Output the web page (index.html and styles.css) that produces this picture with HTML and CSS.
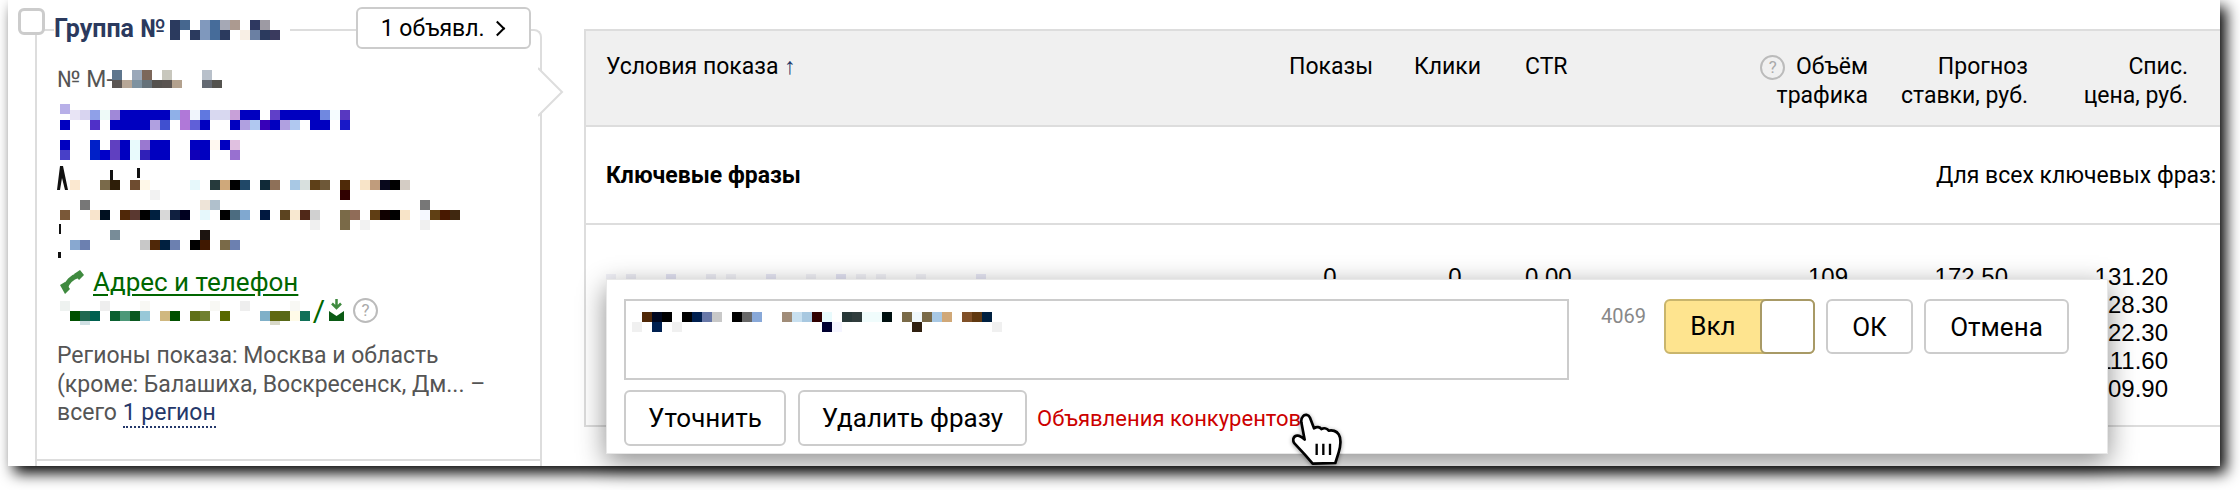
FILE: index.html
```html
<!DOCTYPE html>
<html lang="ru">
<head>
  <meta charset="UTF-8">
  <title>Группа объявлений</title>
  <link rel="stylesheet" href="styles.css">
</head>
<body>
  <div class="shot">
  <div class="page">

    <!-- Левая карточка группы -->
    <section class="group">
      <div class="group-head">
        <span class="checkbox"></span>
        <div class="group-title"><span class="group-name">Группа №</span>
          <svg class="mosaic mosaic-title" width="120" height="20">
            <rect x="0" y="0" fill="#2b3a5e"/><rect x="10" y="0" fill="#46678f"/><rect x="30" y="0" fill="#8199bd"/><rect x="40" y="0" fill="#466c9a"/><rect x="50" y="0" fill="#a5a8b5"/><rect x="60" y="0" fill="#ac9a90"/><rect x="80" y="0" fill="#2e3860"/><rect x="90" y="0" fill="#9d9aa3"/>
            <rect x="0" y="10" fill="#2b3a5e"/><rect x="20" y="10" fill="#2b3a5e"/><rect x="30" y="10" fill="#7f98bd"/><rect x="40" y="10" fill="#466c9a"/><rect x="50" y="10" fill="#2b3a5e"/><rect x="70" y="10" fill="#f8efe5"/><rect x="80" y="10" fill="#6b80a3"/><rect x="90" y="10" fill="#2b3a5e"/><rect x="100" y="10" fill="#3a3a5e"/>
          </svg>
        </div>
        <button class="btn btn-ads">1 объявл. <span class="chevron"></span></button>
      </div>

      <div class="group-num"><span class="num-label">№ М-</span><svg class="mosaic mosaic-num" width="110" height="18">
          <rect x="0" y="0" fill="#5e768d"/><rect x="20" y="0" fill="#9aa8ba"/><rect x="30" y="0" fill="#7c675a"/><rect x="50" y="0" fill="#c8c7bd"/><rect x="90" y="0" fill="#b8c0ca"/>
          <rect x="0" y="10" fill="#5b5654"/><rect x="10" y="10" fill="#b7a797"/><rect x="20" y="10" fill="#7e92a0"/><rect x="30" y="10" fill="#66727a"/><rect x="40" y="10" fill="#55524f"/><rect x="50" y="10" fill="#5a5451"/><rect x="60" y="10" fill="#b3a18e"/><rect x="90" y="10" fill="#646a73"/><rect x="100" y="10" fill="#54534f"/>
        </svg>
      </div>

      <!-- Заголовок и текст объявления -->
      <svg class="mosaic mosaic-ad" width="450" height="158">
        <path d="M3 66L0 90H3L5 78L8 90H11L6 66Z M2 124H4V134H2Z M1 152H4V158H1Z" fill="#111"/>
        <rect x="53" y="70" fill="#111" class="sliver"/><rect x="80" y="68" fill="#111" class="sliver"/>
        <g transform="translate(3 0)">
          <rect x="0" y="4" fill="#b8b0e8"/>
          <rect x="10" y="10" fill="#e8e4f5"/><rect x="20" y="10" fill="#d8d4f0"/><rect x="30" y="10" fill="#8fa0e8"/><rect x="40" y="10" fill="#eefaf8"/><rect x="50" y="10" fill="#a088d8"/><rect x="60" y="10" fill="#0000c0"/><rect x="70" y="10" fill="#0000c0"/><rect x="80" y="10" fill="#0000c0"/><rect x="90" y="10" fill="#0000c0"/><rect x="100" y="10" fill="#0000c0"/><rect x="110" y="10" fill="#8fb0e8"/><rect x="120" y="10" fill="#b078d8"/><rect x="130" y="10" fill="#f0f5fc"/><rect x="140" y="10" fill="#6078e0"/><rect x="150" y="10" fill="#d8d8f0"/><rect x="160" y="10" fill="#d8d8f0"/><rect x="170" y="10" fill="#c8a0d8"/><rect x="180" y="10" fill="#0000c0"/><rect x="190" y="10" fill="#0000c0"/><rect x="210" y="10" fill="#6040c8"/><rect x="220" y="10" fill="#0000c0"/><rect x="230" y="10" fill="#0000c0"/><rect x="240" y="10" fill="#0000c0"/><rect x="250" y="10" fill="#0000c0"/><rect x="260" y="10" fill="#7088e0"/><rect x="270" y="10" fill="#f5fcff"/><rect x="280" y="10" fill="#5838c0"/>
          <rect x="0" y="20" fill="#0000c0"/><rect x="30" y="20" fill="#5030c8"/><rect x="50" y="20" fill="#0000c0"/><rect x="60" y="20" fill="#0000c0"/><rect x="70" y="20" fill="#0000c0"/><rect x="80" y="20" fill="#0000c0"/><rect x="90" y="20" fill="#b0a0e0"/><rect x="100" y="20" fill="#4050d0"/><rect x="120" y="20" fill="#b078d8"/><rect x="130" y="20" fill="#6060d8"/><rect x="140" y="20" fill="#0000c0"/><rect x="170" y="20" fill="#0000c0"/><rect x="180" y="20" fill="#b0a0e0"/><rect x="190" y="20" fill="#b0c8f0"/><rect x="200" y="20" fill="#3800b8"/><rect x="210" y="20" fill="#0000c0"/><rect x="220" y="20" fill="#b0a0e0"/><rect x="230" y="20" fill="#b0c8f0"/><rect x="250" y="20" fill="#0000c0"/><rect x="260" y="20" fill="#0000c0"/><rect x="280" y="20" fill="#1818c8"/>
          <rect x="0" y="40" fill="#0000c0"/><rect x="30" y="40" fill="#0020c8"/><rect x="50" y="40" fill="#6040c0"/><rect x="60" y="40" fill="#0000c0"/><rect x="70" y="40" fill="#e8fafc"/><rect x="80" y="40" fill="#9a78d0"/><rect x="90" y="40" fill="#0000c0"/><rect x="100" y="40" fill="#0000c0"/><rect x="130" y="40" fill="#0000c0"/><rect x="140" y="40" fill="#0000c0"/><rect x="150" y="40" fill="#fff8f0"/><rect x="160" y="40" fill="#0000c0"/><rect x="170" y="40" fill="#e0c0e0"/>
          <rect x="0" y="50" fill="#4840c8"/><rect x="30" y="50" fill="#0020c8"/><rect x="40" y="50" fill="#0000c8"/><rect x="50" y="50" fill="#6040c0"/><rect x="60" y="50" fill="#0000c0"/><rect x="70" y="50" fill="#e8fafc"/><rect x="80" y="50" fill="#3020b8"/><rect x="90" y="50" fill="#0000c0"/><rect x="100" y="50" fill="#0000c0"/><rect x="130" y="50" fill="#1000b8"/><rect x="140" y="50" fill="#0000c0"/><rect x="170" y="50" fill="#9870d0"/>
          <rect x="10" y="80" fill="#fbe8d0"/><rect x="40" y="80" fill="#7a6a4a"/><rect x="50" y="80" fill="#2e1e08"/><rect x="70" y="80" fill="#6e4c30"/><rect x="80" y="80" fill="#fff8e8"/><rect x="130" y="80" fill="#e6f8fb"/><rect x="150" y="80" fill="#263a3c"/><rect x="160" y="80" fill="#cfa87a"/><rect x="170" y="80" fill="#000"/><rect x="180" y="80" fill="#204868"/><rect x="200" y="80" fill="#102a38"/><rect x="210" y="80" fill="#8e7058"/><rect x="230" y="80" fill="#a8c8e4"/><rect x="240" y="80" fill="#d8e0de"/><rect x="250" y="80" fill="#5e4018"/><rect x="260" y="80" fill="#6e5838"/><rect x="280" y="80" fill="#4f2a08"/><rect x="300" y="80" fill="#f8e4c8"/><rect x="310" y="80" fill="#c09c7c"/><rect x="320" y="80" fill="#08081c"/><rect x="330" y="80" fill="#000"/><rect x="340" y="80" fill="#d4ccc4"/>
          <rect x="280" y="90" fill="#300000"/><rect x="90" y="90" fill="#f2f2f2"/>
          <rect x="20" y="100" fill="#777"/><rect x="140" y="100" fill="#eee4d8"/><rect x="150" y="100" fill="#b0c0cc"/><rect x="360" y="100" fill="#777"/>
          <rect x="0" y="110" fill="#7a5838"/><rect x="30" y="110" fill="#f8e4cc"/><rect x="40" y="110" fill="#001020"/><rect x="60" y="110" fill="#502808"/><rect x="70" y="110" fill="#5a3830"/><rect x="80" y="110" fill="#000"/><rect x="90" y="110" fill="#002040"/><rect x="100" y="110" fill="#d8d8d8"/><rect x="110" y="110" fill="#102040"/><rect x="120" y="110" fill="#000020"/><rect x="140" y="110" fill="#e6f8fc"/><rect x="160" y="110" fill="#000"/><rect x="170" y="110" fill="#4c6c80"/><rect x="180" y="110" fill="#80a8d0"/><rect x="200" y="110" fill="#001840"/><rect x="220" y="110" fill="#5c4420"/><rect x="230" y="110" fill="#f8e8d0"/><rect x="240" y="110" fill="#502818"/><rect x="250" y="110" fill="#d0d0d0"/><rect x="280" y="110" fill="#7a6a48"/><rect x="290" y="110" fill="#906c58"/><rect x="310" y="110" fill="#603e14"/><rect x="320" y="110" fill="#100000"/><rect x="330" y="110" fill="#000"/><rect x="340" y="110" fill="#f8e4c8"/><rect x="360" y="110" fill="#f5f8ff"/><rect x="370" y="110" fill="#604014"/><rect x="380" y="110" fill="#481800"/><rect x="390" y="110" fill="#402810"/>
          <rect x="250" y="120" fill="#f0f0f0"/><rect x="280" y="120" fill="#7a6a48"/><rect x="300" y="120" fill="#f2f2f2"/><rect x="360" y="120" fill="#f0f0f0"/>
          <rect x="50" y="130" fill="#788c98"/><rect x="140" y="130" fill="#1c1410"/>
          <rect x="10" y="140" fill="#88a8d0"/><rect x="20" y="140" fill="#6c80b0"/><rect x="80" y="140" fill="#c8c8c8"/><rect x="90" y="140" fill="#502808"/><rect x="100" y="140" fill="#002040"/><rect x="110" y="140" fill="#6c80b0"/><rect x="130" y="140" fill="#000"/><rect x="140" y="140" fill="#401800"/><rect x="160" y="140" fill="#7a6a48"/><rect x="170" y="140" fill="#6c80b0"/>
        </g>
      </svg>

      <div class="contact-link">
        <svg class="icon-phone" width="24" height="24" viewBox="0 0 24 24">
          <path d="M5.500 18C6.500 12.500 12 7 18 5.500" fill="none" stroke="#3f8a3f" stroke-width="5"/>
          <path d="M14 4L20 0L24 5L19 10Z M0 15L5 12L10 19L5 24Z" fill="#3f8a3f"/>
        </svg>
        <a class="link-green">Адрес и телефон</a>
      </div>

      <div class="contact-site">
        <svg class="mosaic mosaic-site" width="254" height="24">
          <g transform="translate(3 0)">
            <rect x="0" y="0" fill="#eef2f0"/><rect x="40" y="0" fill="#eeeeee"/><rect x="80" y="0" fill="#f8f8f4"/><rect x="150" y="0" fill="#f8f8f4"/><rect x="180" y="0" fill="#eeeeee"/><rect x="230" y="0" fill="#f8f8f4"/>
            <rect x="10" y="10" fill="#005000"/><rect x="20" y="10" fill="#206850"/><rect x="30" y="10" fill="#006050"/><rect x="50" y="10" fill="#0a6030"/><rect x="60" y="10" fill="#4c9878"/><rect x="70" y="10" fill="#0a5820"/><rect x="80" y="10" fill="#98c8d8"/><rect x="100" y="10" fill="#d0b880"/><rect x="110" y="10" fill="#005000"/><rect x="130" y="10" fill="#607018"/><rect x="140" y="10" fill="#708030"/><rect x="160" y="10" fill="#586800"/><rect x="200" y="10" fill="#80b0c8"/><rect x="210" y="10" fill="#606810"/><rect x="220" y="10" fill="#586818"/><rect x="230" y="10" fill="#fffbe8"/><rect x="240" y="10" fill="#107058"/>
            <rect x="20" y="20" fill="#d0e0e4"/><rect x="210" y="20" fill="#d8d8c8"/>
          </g>
        </svg>
        <span class="slash">/</span>
        <svg class="icon-save" width="15" height="24" viewBox="0 0 15 24">
          <path d="M7.500 1V9M3 5.500L7.500 10L12 5.500" fill="none" stroke="#3f8a3f" stroke-width="2.500"/>
          <path d="M0 13L7.500 18L15 13V23H0Z" fill="#0a5a14"/>
        </svg>
        <span class="help help-big">?</span>
      </div>

      <p class="regions">Регионы показа: Москва и область<br>(кроме: Балашиха, Воскресенск, Дм... –<br>всего <span class="link-dotted">1 регион</span></p>

      <div class="group-sep"></div>

      <!-- Стрелка к таблице -->
      <svg class="group-arrow" width="28" height="50" viewBox="0 0 28 50">
        <path d="M0 1L24 25L0 49" fill="#fff" stroke="#ddd" stroke-width="2"/>
      </svg>
    </section>

    <!-- Таблица условий показа -->
    <section class="conditions">
      <div class="row row-head">
        <div class="cell cell-name">Условия показа <span class="sort">↑</span></div>
        <div class="cell">Показы</div>
        <div class="cell">Клики</div>
        <div class="cell">CTR</div>
        <div class="cell cell-right"><span class="help">?</span> Объём<br>трафика</div>
        <div class="cell cell-right">Прогноз<br>ставки, руб.</div>
        <div class="cell cell-right">Спис.<br>цена, руб.</div>
      </div>
      <div class="row-title">
        <strong class="title-phrases">Ключевые фразы</strong>
        <span class="title-all">Для всех ключевых фраз:</span>
      </div>
      <div class="row row-data">
        <div class="cell cell-name">
          <svg class="mosaic mosaic-peek" width="410" height="5">
            <rect x="0" y="0" fill="#f2f2f8"/><rect x="20" y="0" fill="#eeeef6"/><rect x="60" y="0" fill="#e4e4f4"/><rect x="100" y="0" fill="#eeeef6"/><rect x="120" y="0" fill="#f2f2f8"/><rect x="160" y="0" fill="#e8e8f6"/><rect x="200" y="0" fill="#f2f2f8"/><rect x="230" y="0" fill="#e4e4f4"/><rect x="250" y="0" fill="#f2f2f8"/><rect x="270" y="0" fill="#f2f2f8"/><rect x="310" y="0" fill="#f2f2f8"/><rect x="370" y="0" fill="#e8e8f6"/>
          </svg>
        </div>
        <div class="cell cell-center">0</div>
        <div class="cell cell-center">0</div>
        <div class="cell">0.00</div>
        <div class="cell cell-val">109</div>
        <div class="cell cell-val">172.50</div>
        <div class="cell cell-val">131.20<br>128.30<br>122.30<br>111.60<br>109.90</div>
      </div>
    </section>

    <!-- Окно редактирования фразы -->
    <div class="popup">
      <div class="popup-top">
        <div class="phrase-input">
          <svg class="mosaic mosaic-phrase" width="380" height="20">
            <rect x="10" y="0" fill="#502808"/><rect x="20" y="0" fill="#000820"/><rect x="30" y="0" fill="#000"/><rect x="50" y="0" fill="#000"/><rect x="60" y="0" fill="#002050"/><rect x="70" y="0" fill="#6878a8"/><rect x="80" y="0" fill="#c8c8c8"/><rect x="100" y="0" fill="#000"/><rect x="110" y="0" fill="#686868"/><rect x="120" y="0" fill="#88a8d8"/><rect x="150" y="0" fill="#a08c78"/><rect x="160" y="0" fill="#c8e0f0"/><rect x="170" y="0" fill="#a8c8e0"/><rect x="180" y="0" fill="#300000"/><rect x="190" y="0" fill="#e8fafc"/><rect x="210" y="0" fill="#283838"/><rect x="220" y="0" fill="#303c3c"/><rect x="230" y="0" fill="#f0fcfc"/><rect x="240" y="0" fill="#f0fcfc"/><rect x="250" y="0" fill="#001010"/><rect x="270" y="0" fill="#7a6a48"/><rect x="280" y="0" fill="#f0f8fc"/><rect x="290" y="0" fill="#7a6a48"/><rect x="300" y="0" fill="#a8c8e4"/><rect x="310" y="0" fill="#d0a878"/><rect x="330" y="0" fill="#805028"/><rect x="340" y="0" fill="#603810"/><rect x="350" y="0" fill="#002040"/>
            <rect x="0" y="10" fill="#f0f0f0"/><rect x="20" y="10" fill="#002050"/><rect x="40" y="10" fill="#f0f0f0"/><rect x="190" y="10" fill="#000030"/><rect x="200" y="10" fill="#f5f5ff"/><rect x="280" y="10" fill="#302010"/><rect x="360" y="10" fill="#f0f0f0"/>
          </svg>
        </div>
        <span class="counter">4069</span>
        <div class="toggle">
          <span class="toggle-label">Вкл</span>
          <span class="toggle-knob"></span>
        </div>
        <button class="btn btn-ok">ОК</button>
        <button class="btn btn-cancel">Отмена</button>
      </div>
      <div class="popup-bottom">
        <button class="btn btn-refine">Уточнить</button>
        <button class="btn btn-delete">Удалить фразу</button>
        <a class="link-red">Объявления конкурентов</a>
      </div>
    </div>

    <!-- Курсор -->
    <svg class="cursor" width="50" height="54" viewBox="0 0 150 162">
      <path d="M33 10C38 3 50 4 54 14L66 46C74 40 84 42 88 48C96 44 106 46 110 53C120 50 134 54 140 64C148 76 146 100 140 118L130 150L62 152L38 124L8 92C0 82 4 70 14 68C22 66 30 72 38 80L28 28C27 20 29 14 33 10Z" fill="#fff" stroke="#000" stroke-width="8" stroke-linejoin="round"/>
      <path d="M74 92V126M94 92V126M114 92V126" stroke="#000" stroke-width="7" fill="none"/>
    </svg>
  </div>
  </div>
</body>
</html>
```

FILE: styles.css
```css
* {
  margin: 0;
  padding: 0;
  box-sizing: border-box;
}

html,
body {
  height: 100%;
}

body {
  background: #fff;
  font-family: Roboto, Arial, sans-serif;
  font-size: 23px;
  color: #000;
}

/* Снимок с тёмной тенью */
.shot {
  width: 2212px;
  height: 466px;
  margin-left: 8px;
  background: #fff;
  box-shadow: 6px 7px 14px #000;
}

.page {
  position: relative;
  display: flex;
  align-items: flex-start;
  height: 100%;
}

.mosaic rect {
  width: 10px;
  height: 10px;
  shape-rendering: crispEdges;
}

.mosaic .sliver {
  width: 3px;
}

.btn {
  height: 42px;
  background: #fff;
  border: 2px solid #ccc;
  border-radius: 6px;
  font-family: inherit;
  font-size: 26px;
  color: #000;
}

.help {
  display: inline-block;
  width: 25px;
  height: 25px;
  border: 2px solid #bbb;
  border-radius: 50%;
  font-size: 17px;
  line-height: 21px;
  text-align: center;
  color: #aaa;
  vertical-align: 1px;
}

/* Левая карточка */
.group {
  position: relative;
  flex: none;
  width: 507px;
  height: 437px;
  margin: 29px 0 0 27px;
  border: 2px solid #ddd;
  border-bottom: 0;
  border-top-right-radius: 8px;
  padding-left: 20px;
}

.group-head {
  display: flex;
  align-items: center;
  height: 42px;
  margin: -24px 9px 0 -20px;
}

.checkbox {
  flex: none;
  align-self: flex-start;
  width: 27px;
  height: 27px;
  margin: 1px 0 0 -19px;
  background: #fff;
  border: 3px solid #ccc;
  border-radius: 6px;
}

.group-title {
  display: flex;
  align-items: center;
  height: 34px;
  margin-left: 9px;
  background: #fff;
  font-size: 25px;
  font-weight: 700;
  color: #2b3a5e;
  white-space: nowrap;
}

.group-name {
  flex: none;
  width: 116px;
}

.mosaic-title {
  margin-top: 3px;
}

.btn-ads {
  width: 175px;
  margin-left: auto;
  font-size: 23px;
}

.chevron {
  display: inline-block;
  width: 11px;
  height: 11px;
  margin: 0 3px 0 2px;
  border-top: 2px solid #000;
  border-right: 2px solid #000;
  transform: rotate(45deg);
  vertical-align: 2px;
}

.group-num {
  display: flex;
  align-items: flex-start;
  height: 28px;
  margin-top: 17px;
  line-height: 28px;
  color: #555;
  white-space: nowrap;
}

.num-label {
  flex: none;
  width: 55px;
}

.mosaic-num {
  margin-top: 4px;
}

.mosaic-ad {
  display: block;
  margin-top: 6px;
}

.contact-link {
  display: flex;
  align-items: center;
  gap: 9px;
  height: 28px;
  margin: 10px 0 0 3px;
  font-size: 26px;
}

.link-green {
  color: #060;
  text-decoration: underline;
  text-underline-offset: 3px;
}

.contact-site {
  display: flex;
  align-items: center;
  height: 28px;
}

.mosaic-site {
  flex: none;
  margin-top: 6px;
}

.slash {
  flex: none;
  width: 16px;
  font-size: 30px;
  text-align: center;
  color: #060;
}

.icon-save {
  flex: none;
  margin: 0 9px 0 2px;
}

.regions {
  margin-top: 18px;
  font-size: 23px;
  line-height: 28.5px;
  color: #555;
  white-space: nowrap;
}

.link-dotted {
  color: #24386a;
  border-bottom: 2px dotted #24386a;
}

.group-sep {
  height: 2px;
  margin: 31px 0 0 -20px;
  background: #ddd;
}

.group-arrow {
  position: absolute;
  top: 36px;
  right: -26px;
}

/* Таблица условий */
.conditions {
  flex: none;
  width: 1636px;
  margin: 29px 0 0 42px;
  overflow: hidden;
}

.row {
  display: grid;
  grid-template-columns: 703px 125px 111px 100px 243px 160px 160px;
}

.row-head {
  height: 98px;
  padding-top: 21px;
  background: #f0f0f0;
  border-top: 2px solid #ddd;
  border-left: 2px solid #ddd;
  border-bottom: 2px solid #ddd;
  line-height: 29px;
}

.cell-name {
  padding-left: 20px;
}

.cell-right {
  text-align: right;
}

.sort {
  color: #24386a;
}

.row-head .help {
  margin-right: 5px;
}

.row-title {
  display: flex;
  align-items: center;
  height: 98px;
  border-left: 2px solid #ddd;
  border-bottom: 2px solid #ddd;
  white-space: nowrap;
}

.title-phrases {
  flex: none;
  width: 1350px;
  padding-left: 20px;
}

.row-data {
  height: 202px;
  padding-top: 38px;
  border-left: 2px solid #ddd;
  border-bottom: 2px solid #ddd;
  font-family: "Liberation Sans", Arial, sans-serif;
  font-size: 24px;
  line-height: 28px;
}

.mosaic-peek {
  display: block;
  margin-top: 11px;
}

.cell-center {
  width: 82px;
  text-align: center;
}

.cell-val {
  padding-right: 20px;
  text-align: right;
}

/* Всплывающее окно */
.popup {
  position: absolute;
  left: 598px;
  top: 279px;
  width: 1502px;
  height: 175px;
  padding: 19px 18px 0 17px;
  background: #fff;
  border: 1px solid #e8e8e8;
  box-shadow: 0 8px 26px rgba(0, 0, 0, 0.45);
}

.popup-top {
  display: flex;
  align-items: flex-start;
}

.phrase-input {
  flex: none;
  width: 945px;
  height: 81px;
  padding: 10px 0 0 6px;
  border: 2px solid #ccc;
}

.counter {
  width: 95px;
  padding: 5px 0 0 32px;
  font-size: 20px;
  color: #888;
}

.toggle {
  display: flex;
  flex: none;
  width: 151px;
  height: 55px;
  background: #fee48f;
  border: 2px solid #c9b56c;
  border-radius: 6px;
}

.toggle-label {
  width: 94px;
  font-size: 26px;
  line-height: 51px;
  text-align: center;
}

.toggle-knob {
  flex: 1;
  margin: -2px -2px -2px 0;
  background: #fff;
  border: 2px solid #a89a66;
  border-radius: 6px;
}

.btn-ok {
  width: 87px;
  height: 55px;
  margin-left: 11px;
}

.btn-cancel {
  width: 145px;
  height: 55px;
  margin-left: 11px;
}

.popup-bottom {
  display: flex;
  align-items: center;
  margin-top: 10px;
}

.btn-refine {
  width: 162px;
  height: 56px;
}

.btn-delete {
  width: 229px;
  height: 56px;
  margin-left: 12px;
}

.link-red {
  margin-left: 10px;
  color: #c00;
  font-size: 22px;
}

/* Курсор поверх окна */
.cursor {
  position: absolute;
  left: 1284px;
  top: 413px;
  filter: drop-shadow(0 1px 2px rgba(0, 0, 0, 0.4));
}
```
